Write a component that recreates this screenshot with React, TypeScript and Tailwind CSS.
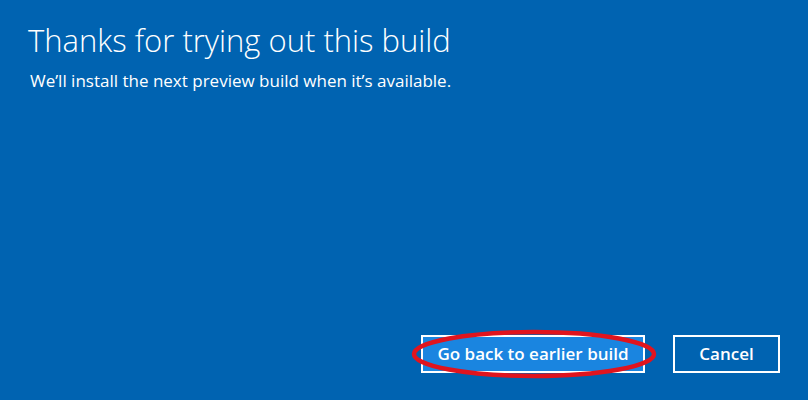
export default function App() {
  return (
    <div
      className="relative flex h-[400px] w-[808px] flex-col bg-[#0063b1] text-white"
      style={{ fontFamily: '"Open Sans", "Noto Sans", sans-serif' }}
    >
      <div className="pl-[28px] pt-[20px]">
        <h1 className="text-[31px] font-light leading-[40px]">Thanks for trying out this build</h1>
        <p className="ml-[2px] mt-[10px] text-[17px] font-medium leading-[22px]">
          We’ll install the next preview build when it’s available.
        </p>
      </div>

      <div className="mt-auto mb-[27px] flex justify-end gap-[28px] pr-[28px]">
        <div className="relative">
          <button
            type="button"
            className="h-[38px] w-[224px] border-2 border-white bg-[#1a85e0] text-[17px] font-semibold"
          >
            Go back to earlier build
          </button>
          {/* red annotation ring */}
          <svg
            aria-hidden
            className="pointer-events-none absolute left-[-10px] top-[-6px]"
            width="246"
            height="50"
            viewBox="0 0 246 50"
          >
            <ellipse cx="123" cy="25" rx="120" ry="22" fill="none" stroke="#e0141e" strokeWidth="4.5" />
          </svg>
        </div>
        <button
          type="button"
          className="h-[38px] w-[107px] border-2 border-white text-[17px] font-semibold"
        >
          Cancel
        </button>
      </div>
    </div>
  );
}
